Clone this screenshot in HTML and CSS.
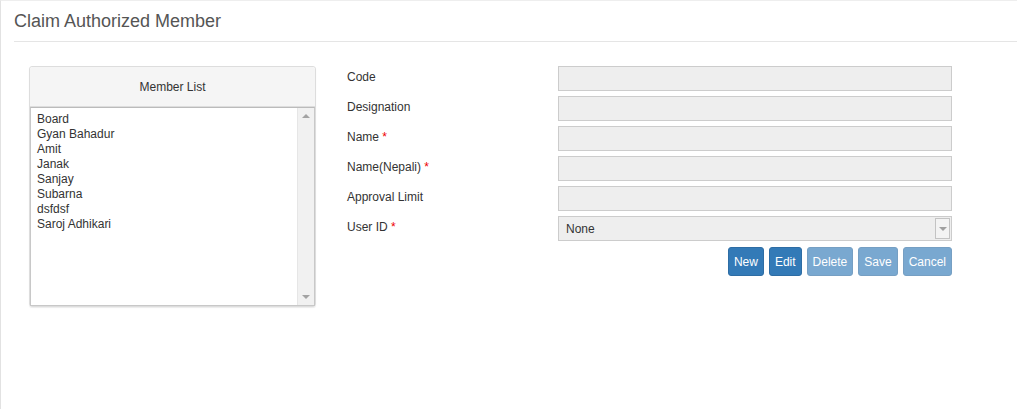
FILE: index.html
```html
<!DOCTYPE html>
<html>
<head>
<meta charset="utf-8">
<link rel="stylesheet" href="styles.css">
</head>
<body>
<div class="page">
  <div class="title-bar"><h1 class="title">Claim Authorized Member</h1></div>
  <div class="content">
    <div class="panel">
      <div class="panel-head">Member List</div>
      <div class="listbox">
        <ul class="items">
          <li>Board</li>
          <li>Gyan Bahadur</li>
          <li>Amit</li>
          <li>Janak</li>
          <li>Sanjay</li>
          <li>Subarna</li>
          <li>dsfdsf</li>
          <li>Saroj Adhikari</li>
        </ul>
        <div class="scrollbar">
          <span class="arrow-up"></span>
          <span class="arrow-down"></span>
        </div>
      </div>
    </div>
    <div class="form">
      <div class="row"><label class="lbl">Code</label><div class="input"></div></div>
      <div class="row"><label class="lbl">Designation</label><div class="input"></div></div>
      <div class="row"><label class="lbl">Name <span class="req">*</span></label><div class="input"></div></div>
      <div class="row"><label class="lbl">Name(Nepali) <span class="req">*</span></label><div class="input"></div></div>
      <div class="row"><label class="lbl">Approval Limit</label><div class="input"></div></div>
      <div class="row"><label class="lbl">User ID <span class="req">*</span></label><div class="input select"><span class="sel-text">None</span><span class="sel-btn"><span class="caret"></span></span></div></div>
      <div class="buttons">
        <button class="btn">New</button>
        <button class="btn">Edit</button>
        <button class="btn disabled">Delete</button>
        <button class="btn disabled">Save</button>
        <button class="btn disabled">Cancel</button>
      </div>
    </div>
  </div>
</div>
</body>
</html>
```
FILE: styles.css
```css
html, body { margin: 0; padding: 0; background: #fff; }
body { font-family: "Liberation Sans", Arial, sans-serif; color: #333; font-size: 12px; }
.page {
  height: 409px;
  box-sizing: border-box;
  border-left: 1px solid #e2e2e2;
  border-top: 1px solid #eeeeee;
}
.title-bar {
  margin-left: 13px;
  padding-top: 10px;
  height: 30px;
  border-bottom: 1px solid #e5e5e5;
}
.title {
  margin: 0;
  font-weight: normal;
  font-size: 18px;
  line-height: 21px;
  color: #555;
}
.content {
  display: flex;
  padding-top: 24px;
  padding-left: 28px;
}
.panel {
  width: 285px;
  height: 239px;
  border: 1px solid #ddd;
  border-radius: 3px;
  box-shadow: 0 1px 1px rgba(0,0,0,0.08);
  display: flex;
  flex-direction: column;
}
.panel-head {
  height: 39px;
  background: #f5f5f5;
  border-bottom: 1px solid #ddd;
  text-align: center;
  line-height: 40px;
  font-size: 12px;
  color: #333;
  border-radius: 3px 3px 0 0;
}
.listbox {
  flex: 1;
  display: flex;
  border: 1px solid #c8c8c8;
  border-top-color: #bbb;
  margin: 0;
}
.items {
  list-style: none;
  margin: 0;
  padding: 4px 0 0 6px;
  flex: 1;
  line-height: 15px;
  color: #333;
}
.scrollbar {
  width: 16px;
  background: #f1f1f1;
  border-left: 1px solid #e6e6e6;
  position: relative;
}
.arrow-up, .arrow-down {
  position: absolute;
  left: 4px;
  width: 0; height: 0;
  border-left: 4px solid transparent;
  border-right: 4px solid transparent;
}
.arrow-up { top: 6px; border-bottom: 4px solid #a3a3a3; }
.arrow-down { bottom: 6px; border-top: 4px solid #a3a3a3; }
.form {
  margin-left: 31px;
  display: flex;
  flex-direction: column;
}
.row {
  display: flex;
  height: 30px;
}
.lbl {
  width: 211px;
  padding-top: 4px;
  line-height: 14px;
  color: #333;
}
.req { color: #e00; }
.input {
  width: 392px;
  height: 23px;
  background: #eeeeee;
  border: 1px solid #cccccc;
}
.select {
  display: flex;
  align-items: center;
  justify-content: space-between;
}
.sel-text { padding-left: 7px; color: #333; }
.sel-btn {
  width: 15px;
  height: 21px;
  margin-right: 1px;
  border: 1px solid #c3c3c3;
  background: #f3f3f3;
  box-sizing: border-box;
  display: flex;
  align-items: center;
  justify-content: center;
}
.caret {
  width: 0; height: 0;
  border-left: 4px solid transparent;
  border-right: 4px solid transparent;
  border-top: 4px solid #a0a0a0;
}
.buttons {
  display: flex;
  justify-content: flex-end;
  gap: 5px;
  margin-top: 1px;
}
.btn {
  font-family: "Liberation Sans", Arial, sans-serif;
  font-size: 12px;
  color: #fff;
  background: #337ab7;
  border: 1px solid #2e6da4;
  border-radius: 3px;
  height: 29px;
  padding: 0 5px;
}
.btn.disabled {
  opacity: 0.65;
}
```
